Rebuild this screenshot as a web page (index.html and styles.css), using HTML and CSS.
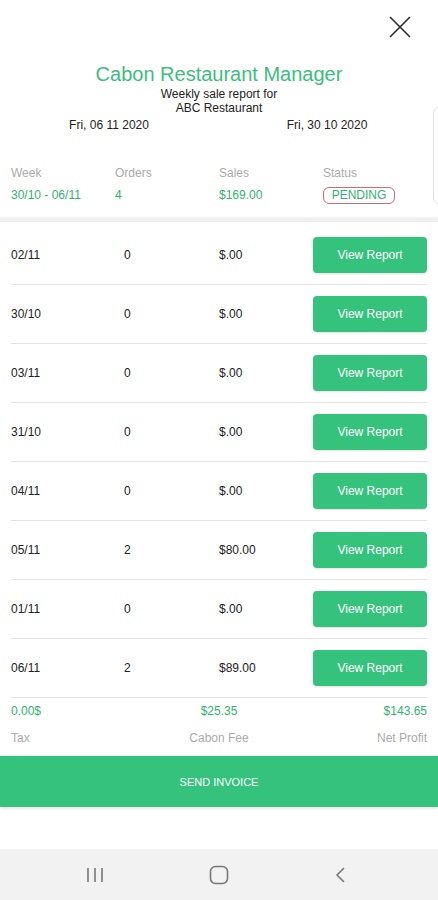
FILE: index.html
```html
<!DOCTYPE html>
<html lang="en">
<head>
    <meta charset="UTF-8">
    <title>Weekly Sale Report</title>
    <link rel="stylesheet" href="styles.css">
</head>
<body>
    <div class="screen">
        <div class="top-bar">
            <button class="close-btn" aria-label="Close">
                <svg width="22" height="22" viewBox="0 0 22 22">
                    <path d="M1 1 L21 21 M21 1 L1 21" stroke="#2b2b2b" stroke-width="1.6" fill="none"/>
                </svg>
            </button>
        </div>

        <h1 class="title">Cabon Restaurant Manager</h1>
        <p class="subtitle">Weekly sale report for<br>ABC Restaurant</p>

        <!-- week carousel -->
        <div class="carousel">
            <div class="slide">
                <div class="dates">
                    <span>Fri, 06 11 2020</span>
                    <span>Fri, 30 10 2020</span>
                </div>
                <div class="stats">
                    <span class="label">Week</span>
                    <span class="label">Orders</span>
                    <span class="label">Sales</span>
                    <span class="label">Status</span>
                    <span class="value">30/10 - 06/11</span>
                    <span class="value">4</span>
                    <span class="value">$169.00</span>
                    <span class="value"><span class="badge">PENDING</span></span>
                </div>
            </div>
            <div class="slide-peek"></div>
        </div>

        <div class="divider-band"></div>

        <ul class="days">
            <li class="day"><span class="d-date">02/11</span><span class="d-orders">0</span><span class="d-sales">$.00</span><button class="view-btn">View Report</button></li>
            <li class="day"><span class="d-date">30/10</span><span class="d-orders">0</span><span class="d-sales">$.00</span><button class="view-btn">View Report</button></li>
            <li class="day"><span class="d-date">03/11</span><span class="d-orders">0</span><span class="d-sales">$.00</span><button class="view-btn">View Report</button></li>
            <li class="day"><span class="d-date">31/10</span><span class="d-orders">0</span><span class="d-sales">$.00</span><button class="view-btn">View Report</button></li>
            <li class="day"><span class="d-date">04/11</span><span class="d-orders">0</span><span class="d-sales">$.00</span><button class="view-btn">View Report</button></li>
            <li class="day"><span class="d-date">05/11</span><span class="d-orders">2</span><span class="d-sales">$80.00</span><button class="view-btn">View Report</button></li>
            <li class="day"><span class="d-date">01/11</span><span class="d-orders">0</span><span class="d-sales">$.00</span><button class="view-btn">View Report</button></li>
            <li class="day"><span class="d-date">06/11</span><span class="d-orders">2</span><span class="d-sales">$89.00</span><button class="view-btn">View Report</button></li>
        </ul>

        <div class="totals">
            <span class="t-value">0.00$</span>
            <span class="t-value center">$25.35</span>
            <span class="t-value right">$143.65</span>
            <span class="t-label">Tax</span>
            <span class="t-label center">Cabon Fee</span>
            <span class="t-label right">Net Profit</span>
        </div>

        <button class="send-btn">SEND INVOICE</button>

        <!-- android nav bar -->
        <nav class="nav-bar">
            <svg width="18" height="16" viewBox="0 0 18 16">
                <path d="M2 1 V15 M9 1 V15 M16 1 V15" stroke="#777" stroke-width="1.6" fill="none"/>
            </svg>
            <svg width="20" height="20" viewBox="0 0 20 20">
                <rect x="1.5" y="1.5" width="17" height="17" rx="5" stroke="#777" stroke-width="1.6" fill="none"/>
            </svg>
            <svg width="14" height="18" viewBox="0 0 14 18">
                <path d="M11 2 L4 9 L11 16" stroke="#777" stroke-width="1.6" fill="none"/>
            </svg>
        </nav>
    </div>
</body>
</html>
```

FILE: styles.css
```css
* {
    margin: 0;
    padding: 0;
    box-sizing: border-box;
}

body {
    font-family: 'Liberation Sans', Arial, sans-serif;
    background: #ffffff;
    color: #222;
    width: 438px;
    overflow-x: hidden;
}

.screen {
    height: 900px;
    display: flex;
    flex-direction: column;
}

.top-bar {
    display: flex;
    justify-content: flex-end;
    padding: 16px 27px 0 0;
    height: 62px;
}

.close-btn {
    background: none;
    border: none;
    width: 22px;
    height: 22px;
    cursor: pointer;
}

.title {
    font-size: 20px;
    font-weight: 400;
    line-height: 24px;
    color: #3bbf7f;
    text-align: center;
}

.subtitle {
    font-size: 12px;
    line-height: 14px;
    text-align: center;
    color: #222;
    margin-top: 1px;
}

/* week carousel */
.carousel {
    position: relative;
    overflow-x: clip;
    margin-top: -8px;
}

.slide {
    padding: 10px 0 1px;
    height: 98px;
}

.slide-peek {
    position: absolute;
    left: 433px;
    top: 0;
    width: 30px;
    height: 97px;
    border: 1px solid #e2e2e2;
    border-radius: 6px;
}

.dates {
    display: grid;
    grid-template-columns: 1fr 1fr;
    text-align: center;
    font-size: 12px;
    line-height: 16px;
    padding-right: 2px;
}

.stats {
    display: grid;
    grid-template-columns: 104px 104px 104px 1fr;
    padding-left: 11px;
    margin-top: 32px;
    row-gap: 6px;
}

.label {
    font-size: 12px;
    line-height: 16px;
    color: #aaa;
}

.value {
    font-size: 12px;
    line-height: 17px;
    color: #2fb273;
}

.badge {
    display: inline-block;
    width: 72px;
    height: 17px;
    line-height: 14px;
    text-align: center;
    border: 1.5px solid #cf6b73;
    border-radius: 6px;
    color: #2fb273;
}

.divider-band {
    margin-top: 12px;
    height: 5px;
    background: linear-gradient(to bottom, #f3f3f3, #ececec);
}

/* daily rows */
.days {
    list-style: none;
    padding: 4px 11px 0;
}

.day {
    display: flex;
    align-items: center;
    height: 59px;
    border-bottom: 1px solid #e4e4e4;
    font-size: 12px;
    color: #222;
}

.d-date {
    width: 113px;
}

.d-orders {
    width: 95px;
}

.d-sales {
    flex: 1;
}

.view-btn {
    width: 114px;
    height: 36px;
    background: #35c27d;
    color: #fff;
    border: none;
    border-radius: 4px;
    font-family: 'Liberation Sans', Arial, sans-serif;
    font-size: 12px;
    box-shadow: 0 1px 2px rgba(0, 0, 0, 0.12);
    margin-bottom: 1px;
}

.totals {
    display: grid;
    grid-template-columns: 1fr 1fr 1fr;
    padding: 5px 11px 0;
    row-gap: 11px;
}

.t-value {
    font-size: 12px;
    line-height: 16px;
    color: #2fb273;
}

.t-label {
    font-size: 12px;
    line-height: 16px;
    color: #aaa;
}

.center {
    text-align: center;
}

.right {
    text-align: right;
}

.send-btn {
    margin-top: 10px;
    height: 51px;
    width: 100%;
    background: #35c27d;
    color: #fff;
    border: none;
    font-family: 'Liberation Sans', Arial, sans-serif;
    font-size: 11px;
    box-shadow: 0 1px 3px rgba(0, 0, 0, 0.15);
}

.nav-bar {
    margin-top: auto;
    height: 51px;
    background: #f2f2f2;
    display: flex;
    align-items: center;
    justify-content: space-between;
    padding: 0 91px 0 86px;
}
```
